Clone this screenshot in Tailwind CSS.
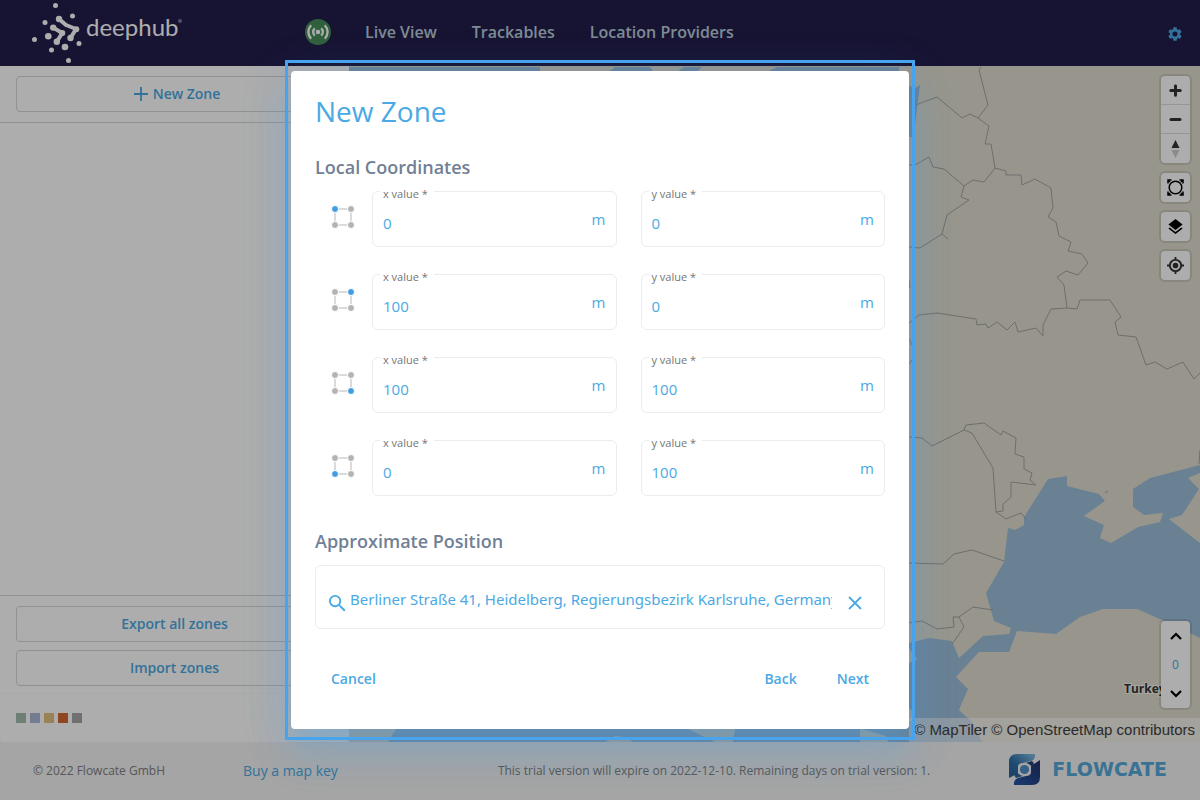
<!DOCTYPE html>
<html lang="en">
<head>
<meta charset="utf-8">
<title>deephub – New Zone</title>
<script src="https://cdn.jsdelivr.net/npm/@tailwindcss/browser@4"></script>
</head>
<body class="relative flex h-screen flex-col overflow-hidden bg-white font-['Open_Sans',sans-serif] text-[#4ba9e3]">

<header class="flex h-[66px] shrink-0 items-center bg-[#221d4b] pr-[18px] text-base font-semibold text-[#bccddb]">
  <a href="#" aria-label="deephub home" class="flex w-[305px] items-center pl-7 text-white">
    <svg class="h-[66px] w-[56px]" viewBox="28 0 56 66" fill="currentColor" aria-hidden="true">
      <circle cx="55.5" cy="5.5" r="2.5"/><circle cx="72.5" cy="16" r="2.5"/><circle cx="45" cy="22.5" r="2.5"/>
      <circle cx="34.5" cy="39.5" r="2.5"/><circle cx="51.5" cy="50" r="2.5"/><circle cx="79" cy="43.5" r="2.5"/>
      <circle cx="68.5" cy="60.5" r="2.5"/><circle cx="65" cy="47" r="3.3"/><circle cx="48.3" cy="36.2" r="3.3"/>
      <circle cx="59" cy="19" r="3.2"/><circle cx="76.3" cy="29.3" r="3"/><circle cx="70.5" cy="38" r="3.2"/>
      <circle cx="53.2" cy="27.6" r="3.2"/><circle cx="62.3" cy="33" r="3"/><circle cx="56.8" cy="41.7" r="3.2"/>
      <path d="M59 19l7 6 10 4-5.500 9M53.200 27.600l9 5.400-5.400 8.700" fill="none" stroke="currentColor" stroke-width="4" stroke-linejoin="round"/>
    </svg>
    <span class="mb-3 ml-0.5 font-['Lato',sans-serif] text-2xl font-normal leading-7">deephub</span>
    <span class="mb-6 size-1 rounded-full bg-white/40"></span>
  </a>
  <svg class="mb-0.5 size-[26px]" viewBox="0 0 26 26" role="img" aria-label="Connected">
    <circle cx="13" cy="13" r="13" fill="#488d57"/>
    <circle cx="13" cy="13" r="2.300" fill="#fff"/>
    <path d="M9.800 9.300a5 5 0 0 0 0 7.400M16.200 9.300a5 5 0 0 1 0 7.400M6.200 6.300a9.500 9.500 0 0 0 0 13.400M19.800 6.300a9.500 9.500 0 0 1 0 13.400" fill="none" stroke="#fff" stroke-width="2.300"/>
  </svg>
  <nav class="mb-0.5 ml-[34px] flex gap-[35px]">
    <a href="#">Live View</a>
    <a href="#">Trackables</a>
    <a href="#">Location Providers</a>
  </nav>
  <button type="button" aria-label="Settings" class="ml-auto text-[#4ba9e3]">
    <svg class="mt-0.5 size-[14px]" viewBox="2 2 20 20" fill="currentColor"><path d="M19.140 12.940c.04-.3.06-.61.06-.94s-.02-.64-.07-.94l2.030-1.580c.18-.14.23-.41.12-.61l-1.920-3.320c-.12-.22-.37-.29-.59-.22l-2.390.96c-.5-.38-1.030-.7-1.620-.94l-.36-2.540A.48.48 0 0 0 13.920 2.400h-3.840c-.24 0-.43.17-.47.41l-.36 2.540c-.59.24-1.130.57-1.620.94l-2.390-.96c-.22-.08-.47 0-.59.22L2.740 8.870c-.12.21-.08.47.12.61l2.030 1.580a7 7 0 0 0 0 1.880l-2.030 1.580c-.18.14-.23.41-.12.61l1.920 3.320c.12.22.37.29.59.22l2.390-.96c.5.38 1.030.7 1.620.94l.36 2.540c.05.24.24.41.48.41h3.840c.24 0 .44-.17.47-.41l.36-2.540c.59-.24 1.130-.56 1.620-.94l2.390.96c.22.08.47 0 .59-.22l1.920-3.320c.12-.22.07-.47-.12-.61zM12 15.600a3.600 3.600 0 1 1 0-7.200 3.600 3.600 0 0 1 0 7.200z"/></svg>
  </button>
</header>

<main class="flex min-h-0 flex-1 bg-[#f3f3f3]">
  <aside class="flex w-[349px] shrink-0 flex-col rounded-b bg-white text-sm font-semibold">
    <div class="border-b border-[#d6d6d6] px-4 py-2.5">
      <button type="button" class="flex h-9 w-full items-center justify-center gap-1 rounded border border-[#d6d6d6] pl-1">
        <svg class="size-4" viewBox="0 0 16 16" stroke="currentColor" stroke-width="1.800" fill="none"><path d="M8 1v14M1 8h14"/></svg>
        New Zone
      </button>
    </div>
    <div class="flex-1"></div>
    <div class="flex flex-col gap-2 border-t border-[#d6d6d6] px-4 pb-[7px] pt-2.5">
      <button type="button" class="h-9 rounded border border-[#d6d6d6]">Export all zones</button>
      <button type="button" class="h-9 rounded border border-[#d6d6d6]">Import zones</button>
    </div>
    <div class="flex h-[49px] items-center gap-1 rounded-t border-t border-[#fafafa] px-4">
      <span class="size-2.5 bg-[#a3bcac]"></span>
      <span class="size-2.5 bg-[#abb9d5]"></span>
      <span class="size-2.5 bg-[#e2c27e]"></span>
      <span class="size-2.5 bg-[#d8682f]"></span>
      <span class="size-2.5 bg-[#a6a6a6]"></span>
    </div>
  </aside>

  <section aria-label="Map" class="relative min-w-0 flex-1 overflow-hidden bg-[#e0dece]">
    <svg class="absolute inset-0 h-full w-full" viewBox="349 66 851 676" preserveAspectRatio="xMinYMin slice" aria-hidden="true">
      <g fill="#9dbedb">
        <path d="M1048 479L1067 476 1067 486 1099 494 1105 501 1084 516 1104 525 1100 538 1111 543 1138 527 1160 522 1163 513 1144 515 1133 507 1133 489 1150 478 1200 465 1200 473 1188 478 1199 489 1182 515 1169 519 1200 543 1200 638 1162 620 1137 609 1103 609 1080 617 1056 634 1017 631 1009 652 979 652 956 677 968 689 959 710 972 722 982 742 388 742 396 729 860 700 909 643 929 638 952 641 959 658 983 636 1009 634 1011 628 994 621 986 593 1004 562 1008 528 1015 530 1024 525 1024 517z"/>
        <path d="M349 67H540V80H349zM610 71l5-4h35l3 4zM678 71l6-4h18l-4 4zM769 71l8-4H899v4zM909 86l6 2 5-3-5 40-1 12h-5z"/>
      </g>
      <path fill="#e0dece" d="M688 729l27 13h18l2-13zM605 742l10-6 10 1 8 5zM860 729h2l24 7 2 6H860zM909 648l8 11-8 4zM909 708l3 3v10h-3z"/>
      <g fill="none" stroke="#a3a2a0" stroke-width="1">
        <path d="M981 67L979 70 988 105 978 118"/>
        <path d="M913 106L937 97 962 118 970 114 978 118 989 126 985 144 991 144 995 168 1006 171 1006 175 1021 175 1022 185 1035 179 1051 188 1053 208 1048 217 1056 222 1059 236 1071 242 1068 251 1082 254 1088 263 1078 275 1066 271 1057 277 1064 285 1067 308"/>
        <path d="M909 165L915 165 929 157 933 167 944 169 964 186 973 180 984 182 995 168M964 186L961 197 969 200 947 215 942 234 920 248 909 247M942 234l6 5M909 280l1 8"/>
        <path d="M909 323L919 315 937 313 976 319 977 325 986 324 988 328 997 322 1007 330 1015 322 1018 332 1036 328 1043 336 1043 325 1051 309 1067 308 1077 309 1080 300 1110 300 1121 317 1115 322 1118 335 1136 337 1146 365 1155 362 1167 369 1183 362 1194 379 1200 373M909 339l3 6M909 364l3-4"/>
        <path d="M909 437L922 438 932 446 964 430 966 425 984 423 1001 435 1003 431 1016 438 1015 454 1024 457 1024 469 1032 473 1030 480 1036 485 1011 482 1011 497 1003 504 1003 511 996 512 993 468 972 433 964 430M996 512L1006 519 1021 513 1026 519"/>
        <path d="M909 563L943 564 954 554 972 550 1004 561M909 623L922 621 937 629 954 627 953 617 959 617 973 607 993 610M959 617L964 627 952 644M1200 450L1199 464M1105 493l3-2"/>
      </g>
      <text x="1124" y="693" font-family="Open Sans" font-size="12" font-weight="700" fill="#333" stroke="#f3f3ee" stroke-width="2" paint-order="stroke">Turkey</text>
    </svg>

    <div class="absolute right-2.5 top-2.5 flex w-[29px] flex-col gap-2.5 text-black">
      <div class="flex flex-col divide-y divide-[#ddd] rounded bg-white ring-2 ring-black/10">
        <button type="button" aria-label="Zoom in" class="grid h-[29px] place-items-center text-[#333]"><svg class="size-[29px]" viewBox="0 0 29 29" fill="currentColor"><path d="M14.500 8.500c-.8 0-1.500.6-1.500 1.300v3.200H9.800a1.500 1.500 0 0 0 0 3H13v3.200a1.500 1.500 0 0 0 3 0V16h3.200a1.500 1.500 0 0 0 0-3H16V9.800c0-.7-.7-1.300-1.500-1.300z"/></svg></button>
        <button type="button" aria-label="Zoom out" class="grid h-[29px] place-items-center text-[#333]"><svg class="size-[29px]" viewBox="0 0 29 29" fill="currentColor"><rect x="8.500" y="13" width="12" height="3" rx="1.500"/></svg></button>
        <button type="button" aria-label="Reset bearing" class="grid h-[29px] place-items-center"><svg class="size-[29px]" viewBox="0 0 29 29"><path d="M10.500 14l4-8 4 8z" fill="#333"/><path d="M10.500 16l4 8 4-8z" fill="#ccc"/></svg></button>
      </div>
      <button type="button" aria-label="Fit to area" class="grid h-[29px] place-items-center rounded bg-white ring-2 ring-black/10"><svg class="size-[17px]" viewBox="0 0 17 17" fill="none" stroke="currentColor" stroke-width="1.500"><circle cx="8.500" cy="8.500" r="6.300"/><path d="M1 4.500V1h3.500M12.500 1H16v3.500M16 12.500V16h-3.500M4.500 16H1v-3.500M1 1l2 2M16 1l-2 2M16 16l-2-2M1 16l2-2"/></svg></button>
      <button type="button" aria-label="Layers" class="grid h-[29px] place-items-center rounded bg-white ring-2 ring-black/10"><svg class="size-[15px]" viewBox="3 2 18 19" fill="currentColor"><path d="M12 18.540l-7.370-5.730L3 14.070l9 7 9-7-1.630-1.270zM12 16l7.360-5.730L21 9l-9-7-9 7 1.630 1.270z"/></svg></button>
      <button type="button" aria-label="Find my location" class="grid h-[29px] place-items-center rounded bg-white text-[#333] ring-2 ring-black/10"><svg class="size-[17px]" viewBox="0 0 18 18"><circle cx="9" cy="9" r="6" fill="none" stroke="currentColor" stroke-width="2"/><circle cx="9" cy="9" r="3" fill="currentColor"/><path d="M9 0v3M9 15v3M0 9h3M15 9h3" stroke="currentColor" stroke-width="2"/></svg></button>
    </div>

    <p class="absolute bottom-0 right-0 bg-white/50 px-[5px] font-['Liberation_Sans',sans-serif] text-[15px] leading-6 text-[#404040]"><a href="#">© MapTiler</a> <a href="#">© OpenStreetMap contributors</a></p>

    <div class="absolute bottom-[34px] right-2.5 flex w-[29px] flex-col rounded bg-white text-black ring-2 ring-black/10">
      <button type="button" aria-label="Floor up" class="grid h-[29px] place-items-center"><svg class="h-2 w-3" viewBox="0 0 12 8" fill="none" stroke="currentColor" stroke-width="2.200"><path d="M1 7l5-5 5 5"/></svg></button>
      <output class="grid h-[29px] place-items-center text-xs text-[#4ba9e3]">0</output>
      <button type="button" aria-label="Floor down" class="grid h-[29px] place-items-center"><svg class="h-2 w-3" viewBox="0 0 12 8" fill="none" stroke="currentColor" stroke-width="2.200"><path d="M1 1l5 5 5-5"/></svg></button>
    </div>
  </section>
</main>

<footer class="flex h-[58px] shrink-0 items-center bg-[#f3f3f3] px-[33px] text-xs text-[#808080]">
  <span class="w-[210px]">© 2022 Flowcate GmbH</span>
  <a href="#" class="text-sm text-[#4ba9e3]">Buy a map key</a>
  <span class="ml-40 mr-auto">This trial version will expire on 2022-12-10. Remaining days on trial version: 1.</span>
  <a href="#" class="flex items-center gap-3 text-[#55a8d8]">
    <svg class="mb-1 size-[31px]" viewBox="0 0 31 31" aria-hidden="true">
      <defs>
        <linearGradient id="fa" x1="0" y1="1" x2="1" y2="0"><stop offset="0" stop-color="#2c5f9c"/><stop offset=".4" stop-color="#2c6da8"/><stop offset="1" stop-color="#84bfe0"/></linearGradient>
        <linearGradient id="fb" x1="0" y1="1" x2="1" y2="0"><stop offset="0" stop-color="#2458a8"/><stop offset="1" stop-color="#22306a"/></linearGradient>
      </defs>
      <path fill="url(#fa)" d="M0 24V8Q0 0 8 0H26V3Q25 6 22 7L14 9Q10 9 9 12V18Q8 20 6 21z"/>
      <path fill="url(#fb)" d="M31 6V23Q31 31 23 31H5V28Q6 25 9 24L17 22Q21 22 22 19V13Q23 11 25 10z"/>
      <path fill="#2a63a0" d="M8 17q1 4 6 5l-7 2q-2-2-1-4z"/>
      <path fill="#24407e" d="M23 14q-1-4-6-5l6-2q2 2 2 4z"/>
      <circle cx="15.500" cy="15.500" r="4.600" fill="#4d90c4"/>
    </svg>
    <span class="mb-0.5 font-['DejaVu_Sans',sans-serif] text-[19px] font-bold">FLOWCATE</span>
  </a>
</footer>

<div class="absolute inset-0 flex items-center justify-center bg-black/32">
  <div class="w-[630px] max-w-full border-3 border-[#4aa5ee] px-[3px] py-2">
    <form role="dialog" aria-modal="true" aria-labelledby="dialog-title" class="rounded bg-white px-6 pb-8 pt-[21px] shadow-[0_11px_15px_-7px_rgba(74,165,238,0.2),0_24px_38px_3px_rgba(74,165,238,0.18),0_9px_46px_8px_rgba(74,165,238,0.14)]">
      <h1 id="dialog-title" class="text-[28px] leading-[38px]">New Zone</h1>

      <h2 class="mt-[25px] text-lg font-semibold leading-6 text-[#718096]">Local Coordinates</h2>
      <div class="mt-3 flex flex-col gap-[27px]">
        <div class="flex">
          <div class="flex w-[57px] items-center justify-center pb-1 pr-0.5"><svg class="size-6" viewBox="0 0 24 24" aria-hidden="true"><path d="M4 4h16v16H4z" fill="none" stroke="#d0d0d0" stroke-width="1.500"/><g stroke="#fff"><circle cx="4" cy="4" r="3.500" fill="#429de0"/><circle cx="20" cy="4" r="3.500" fill="#b3b3b3"/><circle cx="20" cy="20" r="3.500" fill="#b3b3b3"/><circle cx="4" cy="20" r="3.500" fill="#b3b3b3"/></g></svg></div>
          <div class="grid flex-1 grid-cols-2 gap-6">
            <div class="relative flex h-14 items-center rounded-md border border-[#ececf0] px-2.5">
              <label for="x1" class="absolute -top-1.5 left-[7px] bg-white px-[3px] pr-1.5 text-[11px] leading-4 text-[#757575]">x value *</label>
              <input id="x1" value="0" required class="h-full min-w-0 flex-1 pt-2 text-[15px] outline-none"><span class="text-[15px]">m</span>
            </div>
            <div class="relative flex h-14 items-center rounded-md border border-[#ececf0] px-2.5">
              <label for="y1" class="absolute -top-1.5 left-[7px] bg-white px-[3px] pr-1.5 text-[11px] leading-4 text-[#757575]">y value *</label>
              <input id="y1" value="0" required class="h-full min-w-0 flex-1 pt-2 text-[15px] outline-none"><span class="text-[15px]">m</span>
            </div>
          </div>
        </div>
        <div class="flex">
          <div class="flex w-[57px] items-center justify-center pb-1 pr-0.5"><svg class="size-6" viewBox="0 0 24 24" aria-hidden="true"><path d="M4 4h16v16H4z" fill="none" stroke="#d0d0d0" stroke-width="1.500"/><g stroke="#fff"><circle cx="4" cy="4" r="3.500" fill="#b3b3b3"/><circle cx="20" cy="4" r="3.500" fill="#429de0"/><circle cx="20" cy="20" r="3.500" fill="#b3b3b3"/><circle cx="4" cy="20" r="3.500" fill="#b3b3b3"/></g></svg></div>
          <div class="grid flex-1 grid-cols-2 gap-6">
            <div class="relative flex h-14 items-center rounded-md border border-[#ececf0] px-2.5">
              <label for="x2" class="absolute -top-1.5 left-[7px] bg-white px-[3px] pr-1.5 text-[11px] leading-4 text-[#757575]">x value *</label>
              <input id="x2" value="100" required class="h-full min-w-0 flex-1 pt-2 text-[15px] outline-none"><span class="text-[15px]">m</span>
            </div>
            <div class="relative flex h-14 items-center rounded-md border border-[#ececf0] px-2.5">
              <label for="y2" class="absolute -top-1.5 left-[7px] bg-white px-[3px] pr-1.5 text-[11px] leading-4 text-[#757575]">y value *</label>
              <input id="y2" value="0" required class="h-full min-w-0 flex-1 pt-2 text-[15px] outline-none"><span class="text-[15px]">m</span>
            </div>
          </div>
        </div>
        <div class="flex">
          <div class="flex w-[57px] items-center justify-center pb-1 pr-0.5"><svg class="size-6" viewBox="0 0 24 24" aria-hidden="true"><path d="M4 4h16v16H4z" fill="none" stroke="#d0d0d0" stroke-width="1.500"/><g stroke="#fff"><circle cx="4" cy="4" r="3.500" fill="#b3b3b3"/><circle cx="20" cy="4" r="3.500" fill="#b3b3b3"/><circle cx="20" cy="20" r="3.500" fill="#429de0"/><circle cx="4" cy="20" r="3.500" fill="#b3b3b3"/></g></svg></div>
          <div class="grid flex-1 grid-cols-2 gap-6">
            <div class="relative flex h-14 items-center rounded-md border border-[#ececf0] px-2.5">
              <label for="x3" class="absolute -top-1.5 left-[7px] bg-white px-[3px] pr-1.5 text-[11px] leading-4 text-[#757575]">x value *</label>
              <input id="x3" value="100" required class="h-full min-w-0 flex-1 pt-2 text-[15px] outline-none"><span class="text-[15px]">m</span>
            </div>
            <div class="relative flex h-14 items-center rounded-md border border-[#ececf0] px-2.5">
              <label for="y3" class="absolute -top-1.5 left-[7px] bg-white px-[3px] pr-1.5 text-[11px] leading-4 text-[#757575]">y value *</label>
              <input id="y3" value="100" required class="h-full min-w-0 flex-1 pt-2 text-[15px] outline-none"><span class="text-[15px]">m</span>
            </div>
          </div>
        </div>
        <div class="flex">
          <div class="flex w-[57px] items-center justify-center pb-1 pr-0.5"><svg class="size-6" viewBox="0 0 24 24" aria-hidden="true"><path d="M4 4h16v16H4z" fill="none" stroke="#d0d0d0" stroke-width="1.500"/><g stroke="#fff"><circle cx="4" cy="4" r="3.500" fill="#b3b3b3"/><circle cx="20" cy="4" r="3.500" fill="#b3b3b3"/><circle cx="20" cy="20" r="3.500" fill="#b3b3b3"/><circle cx="4" cy="20" r="3.500" fill="#429de0"/></g></svg></div>
          <div class="grid flex-1 grid-cols-2 gap-6">
            <div class="relative flex h-14 items-center rounded-md border border-[#ececf0] px-2.5">
              <label for="x4" class="absolute -top-1.5 left-[7px] bg-white px-[3px] pr-1.5 text-[11px] leading-4 text-[#757575]">x value *</label>
              <input id="x4" value="0" required class="h-full min-w-0 flex-1 pt-2 text-[15px] outline-none"><span class="text-[15px]">m</span>
            </div>
            <div class="relative flex h-14 items-center rounded-md border border-[#ececf0] px-2.5">
              <label for="y4" class="absolute -top-1.5 left-[7px] bg-white px-[3px] pr-1.5 text-[11px] leading-4 text-[#757575]">y value *</label>
              <input id="y4" value="100" required class="h-full min-w-0 flex-1 pt-2 text-[15px] outline-none"><span class="text-[15px]">m</span>
            </div>
          </div>
        </div>
      </div>

      <h2 class="mt-[33px] text-lg font-semibold leading-6 text-[#718096]"><label for="position">Approximate Position</label></h2>
      <div class="mt-3 flex h-16 items-center rounded-md border border-[#ececf0] pl-3 pr-[17px] pt-3">
        <svg class="size-[18px]" viewBox="2 2 19 19" fill="currentColor" aria-hidden="true"><path d="M15.500 14h-.79l-.28-.27A6.470 6.470 0 0 0 16 9.500 6.500 6.500 0 1 0 9.500 16c1.610 0 3.090-.59 4.230-1.570l.27.28v.79l5 4.990L20.490 19zm-6 0C7.010 14 5 11.990 5 9.500S7.010 5 9.500 5 14 7.010 14 9.500 11.990 14 9.500 14z"/></svg>
        <input id="position" value="Berliner Straße 41, Heidelberg, Regierungsbezirk Karlsruhe, Germany" class="ml-1 mr-[11px] h-9 min-w-0 flex-1 pb-2 font-['Noto_Sans',sans-serif] text-[15px] outline-none">
        <button type="button" aria-label="Clear position" class="grid size-6 place-items-center"><svg class="size-[14px]" viewBox="0 0 14 14" fill="none" stroke="currentColor" stroke-width="1.800"><path d="M1 1l12 12M13 1L1 13"/></svg></button>
      </div>

      <div class="mt-8 flex gap-2 text-sm font-semibold">
        <button type="button" class="mr-auto h-9 px-4">Cancel</button>
        <button type="button" class="h-9 px-4">Back</button>
        <button type="submit" class="h-9 px-4">Next</button>
      </div>
    </form>
  </div>
</div>
</body>
</html>
